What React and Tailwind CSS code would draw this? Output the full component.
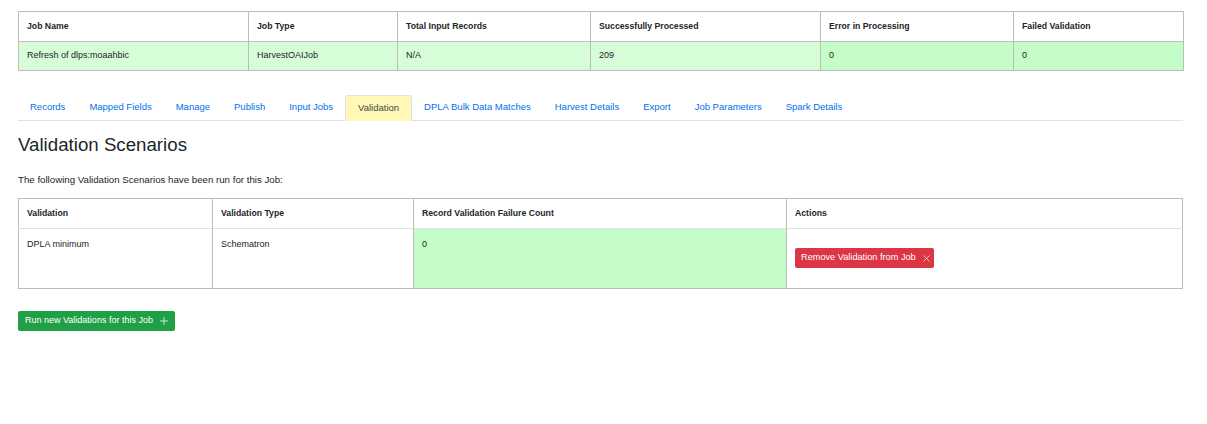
import React from 'react';

const jobCols = [
  { head: 'Job Name', val: 'Refresh of dlps:moaahbic', w: 'w-[230px]', bg: 'bg-[#d7fdd8]' },
  { head: 'Job Type', val: 'HarvestOAIJob', w: 'w-[149px]', bg: 'bg-[#d7fdd8]' },
  { head: 'Total Input Records', val: 'N/A', w: 'w-[193px]', bg: 'bg-[#d7fdd8]' },
  { head: 'Successfully Processed', val: '209', w: 'w-[230px]', bg: 'bg-[#d7fdd8]' },
  { head: 'Error in Processing', val: '0', w: 'w-[193px]', bg: 'bg-[#c4fdc7]' },
  { head: 'Failed Validation', val: '0', w: 'w-[170px]', bg: 'bg-[#c4fdc7]' },
];

const tabs = ['Records', 'Mapped Fields', 'Manage', 'Publish', 'Input Jobs', 'Validation', 'DPLA Bulk Data Matches', 'Harvest Details', 'Export', 'Job Parameters', 'Spark Details'];

function XIcon() {
  return (
    <svg width="7" height="7" viewBox="0 0 7 7" className="shrink-0">
      <path d="M0.5 0.5L6.5 6.5M6.5 0.5L0.5 6.5" stroke="#f5c6cb" strokeWidth="0.9" />
    </svg>
  );
}

function PlusIcon() {
  return (
    <svg width="8" height="8" viewBox="0 0 8 8" className="shrink-0">
      <path d="M4 0V8M0 4H8" stroke="#d4f0dc" strokeWidth="0.9" />
    </svg>
  );
}

export default function App() {
  return (
    <div className="min-h-[424px] bg-white px-[18px] pt-[11px] text-[#212529]" style={{ fontFamily: '"Liberation Sans", Arial, sans-serif' }}>
      {/* job summary */}
      <table className="w-[1165px] table-fixed border-collapse border border-[#bdbdbd] text-[9px]">
        <thead>
          <tr className="h-[30px]">
            {jobCols.map(c => (
              <th key={c.head} className={`${c.w} border border-[#bdbdbd] px-2 text-left text-[8.7px] font-bold`}>{c.head}</th>
            ))}
          </tr>
        </thead>
        <tbody>
          <tr className="h-[29px]">
            {jobCols.map(c => (
              <td key={c.head} className={`${c.bg} border border-[#bdbdbd] px-2`}>{c.val}</td>
            ))}
          </tr>
        </tbody>
      </table>

      {/* tabs */}
      <div className="mt-[24px] flex w-[1165px] border-b border-[#dee2e6] text-[9.5px]">
        {tabs.map(t => t === 'Validation' ? (
          <div key={t} className="-mb-px flex h-[26px] items-center rounded-t-[3px] border border-[#dee2e6] border-b-transparent bg-[#fff9b5] px-[12px] text-[#454545]">{t}</div>
        ) : (
          <div key={t} className="flex h-[25px] items-center px-[12px] text-[#0070f0]">{t}</div>
        ))}
      </div>

      <h2 className="mt-[12px] text-[18.7px] leading-[24px]">Validation Scenarios</h2>
      <p className="mt-[16px] text-[9.7px]">The following Validation Scenarios have been run for this Job:</p>

      {/* validations */}
      <table className="mt-[10px] w-[1165px] table-fixed border-collapse border border-[#bdbdbd] text-[9px]">
        <thead>
          <tr className="h-[30px] border-b border-[#dee2e6] text-[8.7px]">
            <th className="w-[194px] border-r border-[#bdbdbd] px-2 text-left font-bold">Validation</th>
            <th className="w-[201px] border-r border-[#bdbdbd] px-2 text-left font-bold">Validation Type</th>
            <th className="w-[373px] border-r border-[#bdbdbd] px-2 text-left font-bold">Record Validation Failure Count</th>
            <th className="px-2 text-left font-bold">Actions</th>
          </tr>
        </thead>
        <tbody>
          <tr className="h-[60px]">
            <td className="border-r border-[#bdbdbd] px-2 pt-[9px] align-top">DPLA minimum</td>
            <td className="border-r border-[#bdbdbd] px-2 pt-[9px] align-top">Schematron</td>
            <td className="border-r border-[#bdbdbd] bg-[#c4fdc7] px-2 pt-[9px] align-top">0</td>
            <td className="px-2 align-middle">
              <button className="flex h-[20px] items-center gap-[7px] rounded-[2px] bg-[#dc3545] pl-[6px] pr-[4px] text-[9.2px] text-white">
                Remove Validation from Job <XIcon />
              </button>
            </td>
          </tr>
        </tbody>
      </table>

      <button className="mt-[22px] flex h-[20px] items-center gap-[7px] rounded-[2px] bg-[#20a046] pl-[7px] pr-[7px] text-[9px] text-white">
        Run new Validations for this Job <PlusIcon />
      </button>
    </div>
  );
}
